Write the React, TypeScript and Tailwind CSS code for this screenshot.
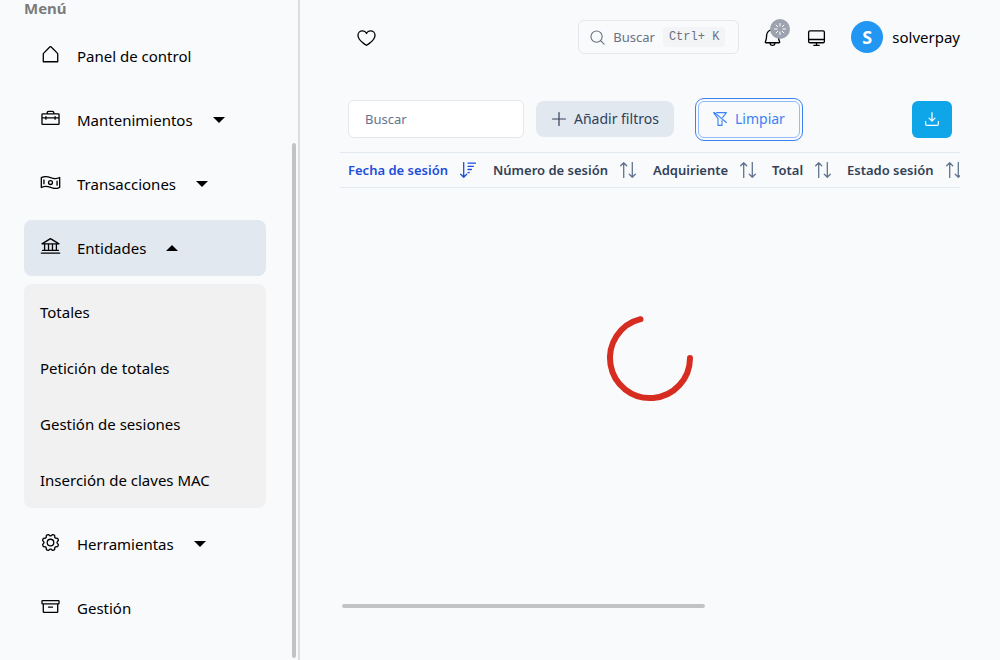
import type { ReactNode } from "react";
import {
  PiArchive,
  PiBank,
  PiBell,
  PiDesktop,
  PiGear,
  PiHeart,
  PiHouseSimple,
  PiMoneyWavy,
  PiToolbox,
} from "react-icons/pi";

function Caret({ up = false }: { up?: boolean }) {
  return (
    <svg viewBox="0 0 12 6" className="ml-5 h-1.5 w-3" aria-hidden="true">
      <path d={up ? "M0 6 L6 0 L12 6Z" : "M0 0 L6 6 L12 0Z"} fill="currentColor" />
    </svg>
  );
}

function NavItem({ icon, label, caret, active = false }: { icon: ReactNode; label: string; caret?: "up" | "down"; active?: boolean }) {
  return (
    <li>
      <a href="#" className={`flex h-14 items-center rounded-lg px-4 ${active ? "bg-slate-200" : ""}`}>
        <span className="mr-4 pb-1 text-[21px]">{icon}</span>
        {label}
        {caret && <Caret up={caret === "up"} />}
      </a>
    </li>
  );
}

function Sidebar() {
  return (
    <aside className="flex w-[300px] shrink-0 justify-between border-r-2 border-[#dedede] pl-6">
      <nav className="w-[242px]">
        <h2 className="mb-3 h-4 leading-4 font-bold text-[#7c7c7c]">Menú</h2>
        <ul className="flex flex-col gap-2">
          <NavItem icon={<PiHouseSimple />} label="Panel de control" />
          <NavItem icon={<PiToolbox />} label="Mantenimientos" caret="down" />
          <NavItem icon={<PiMoneyWavy />} label="Transacciones" caret="down" />
          <NavItem icon={<PiBank />} label="Entidades" caret="up" active />
          <li>
            <ul className="rounded-lg bg-[#f1f1f1]">
              {["Totales", "Petición de totales", "Gestión de sesiones", "Inserción de claves MAC"].map((t) => (
                <li key={t}>
                  <a href="#" className="flex h-14 items-center px-4">{t}</a>
                </li>
              ))}
            </ul>
          </li>
          <NavItem icon={<PiGear />} label="Herramientas" caret="down" />
          <NavItem icon={<PiArchive />} label="Gestión" />
        </ul>
      </nav>
      <div className="mr-0.5 flex w-1 flex-col pt-[143px] pb-0.5">
        <div className="flex-1 rounded-full bg-[#c3c3c3]" />
      </div>
    </aside>
  );
}

function SearchIcon() {
  return (
    <svg viewBox="0 0 16 16" className="size-[15px]" fill="none" stroke="currentColor" strokeWidth="1.2" strokeLinecap="round" aria-hidden="true">
      <circle cx="7" cy="7" r="6" />
      <path d="M11.3 11.3 L15 15" />
    </svg>
  );
}

function TopBar() {
  return (
    <header className="flex h-[54px] items-end">
      <button aria-label="Favoritos" className="mb-1.5 ml-4 text-[21px]">
        <PiHeart />
      </button>
      <button className="ml-auto flex h-[34px] w-[161px] items-center rounded-md border border-gray-200 pl-[11px] text-[13px] text-gray-500">
        <SearchIcon />
        <span className="ml-2">Buscar</span>
        <kbd className="ml-2 rounded bg-gray-100 px-1.5 font-['Liberation_Mono',monospace] text-xs leading-5">Ctrl+ K</kbd>
      </button>
      <button aria-label="Notificaciones" className="relative mb-1.5 ml-[23px] text-[21px]">
        <PiBell />
        <span className="absolute -top-2 left-2 flex size-5 items-center justify-center rounded-full bg-[#9ca3af] text-white">
          <svg viewBox="0 0 12 12" className="size-3" stroke="currentColor" strokeWidth="1" strokeLinecap="round" aria-hidden="true">
            <path d="M6 .5V3M6 9v2.500M.5 6H3M9 6h2.500M2.100 2.100l1.700 1.700M8.200 8.200l1.700 1.700M2.100 9.900l1.700-1.700M8.200 3.800l1.700-1.700" />
          </svg>
        </span>
      </button>
      <button aria-label="Pantalla" className="mb-1.5 ml-[23px] text-[21px]">
        <PiDesktop />
      </button>
      <button className="ml-6 flex h-[34px] items-center gap-[9px]">
        <span className="flex size-8 items-center justify-center rounded-full bg-[#2196f3] text-lg font-bold text-white">S</span>
        <span>solverpay</span>
      </button>
    </header>
  );
}

function SortIcon({ active = false }: { active?: boolean }) {
  return (
    <svg
      viewBox="0 0 16 16"
      className={`size-4 shrink-0 ${active ? "text-[#1d4ed8]" : "text-slate-500"}`}
      fill="none"
      stroke="currentColor"
      strokeWidth="1.3"
      strokeLinecap="round"
      strokeLinejoin="round"
      aria-hidden="true"
    >
      {active ? (
        <path d="M3.700 .6V15.300M.7 12.300l3 3 3-3M8 1.100h7.400M8 4.300h5.400M8 7.500h3.400M8 10.700h1.200" />
      ) : (
        <path d="M3.700 15.400V.7M.7 3.700l3-3 3 3M12.300 .6V15.300M9.300 12.300l3 3 3-3" />
      )}
    </svg>
  );
}

function Toolbar() {
  return (
    <div className="mt-[46px] flex items-center px-2">
      <input
        aria-label="Buscar"
        placeholder="Buscar"
        className="h-[38px] w-44 rounded-md border border-gray-200 bg-white px-4 text-[13px] placeholder:text-slate-500"
      />
      <button className="ml-3 flex h-9 w-[138px] items-center rounded-lg bg-slate-200 pl-4 text-sm text-slate-700">
        <svg viewBox="0 0 14 14" className="mr-2 size-3.5" stroke="currentColor" strokeWidth="1.2" strokeLinecap="round" aria-hidden="true">
          <path d="M7 .6V13.400M.6 7H13.400" />
        </svg>
        Añadir filtros
      </button>
      <button className="ml-6 flex h-[37px] w-[102px] items-center rounded-md border border-[#93bbfb] pl-3.5 text-sm text-[#3b82f6] outline-1 outline-offset-2 outline-[#3b82f6]">
        <svg viewBox="0 0 14 14" className="mr-2 size-3.5" fill="none" stroke="currentColor" strokeWidth="1.1" strokeLinecap="round" strokeLinejoin="round" aria-hidden="true">
          <path d="M3.600 .6H13.400L9.700 5.400M.6 .6L5 6.600V13.400H9V8.500M.6 .6H1.500L13.400 10.500" />
        </svg>
        Limpiar
      </button>
      <button aria-label="Descargar" className="ml-auto flex h-[37px] w-10 items-center justify-center rounded-md bg-[#0ea5e9] text-white">
        <svg viewBox="0 0 14 14" className="size-3.5" fill="none" stroke="currentColor" strokeWidth="1.2" strokeLinecap="round" strokeLinejoin="round" aria-hidden="true">
          <path d="M7 .6V9M4 6.200L7 9.200L10 6.200M.6 9.500V12C.6 12.800 1.200 13.400 2 13.400H12C12.800 13.400 13.400 12.800 13.400 12V9.500" />
        </svg>
      </button>
    </div>
  );
}

const columns = [
  { label: "Fecha de sesión", width: "w-[145px]", active: true },
  { label: "Número de sesión", width: "w-[160px]" },
  { label: "Adquiriente", width: "w-[119px]" },
  { label: "Total", width: "w-[75px]" },
  { label: "Estado sesión", width: "w-[560px]" },
];

function Sessions() {
  return (
    <section className="mt-3.5 flex flex-1 flex-col overflow-hidden">
      <table className="w-[1059px] table-fixed border-y border-slate-200 text-[13px]">
        <thead>
          <tr>
            {columns.map((c) => (
              <th key={c.label} scope="col" className={`h-[35px] p-0 pl-2 text-left font-semibold whitespace-nowrap ${c.width} ${c.active ? "text-[#1d4ed8]" : "text-slate-700"}`}>
                <span className="flex items-center gap-3">
                  {c.label}
                  <SortIcon active={c.active} />
                </span>
              </th>
            ))}
          </tr>
        </thead>
      </table>
      <div role="status" aria-label="Cargando" className="flex h-[416px] justify-center pt-[120px]">
        <svg viewBox="0 0 100 100" className="size-[100px]" fill="none" aria-hidden="true">
          <path d="M90 50A40 40 0 1 1 40.500 11.200" stroke="#d62d20" strokeWidth="6" strokeLinecap="round" />
        </svg>
      </div>
      <div className="ml-0.5 h-1 w-[363px] rounded-full bg-[#c3c3c3]" />
    </section>
  );
}

export default function App() {
  return (
    <div className="flex min-h-screen bg-[#f9fafc] font-['Noto_Sans',sans-serif] text-[15px] leading-5 text-black">
      <Sidebar />
      <main className="flex min-w-0 flex-1 flex-col px-10">
        <TopBar />
        <Toolbar />
        <Sessions />
      </main>
    </div>
  );
}
